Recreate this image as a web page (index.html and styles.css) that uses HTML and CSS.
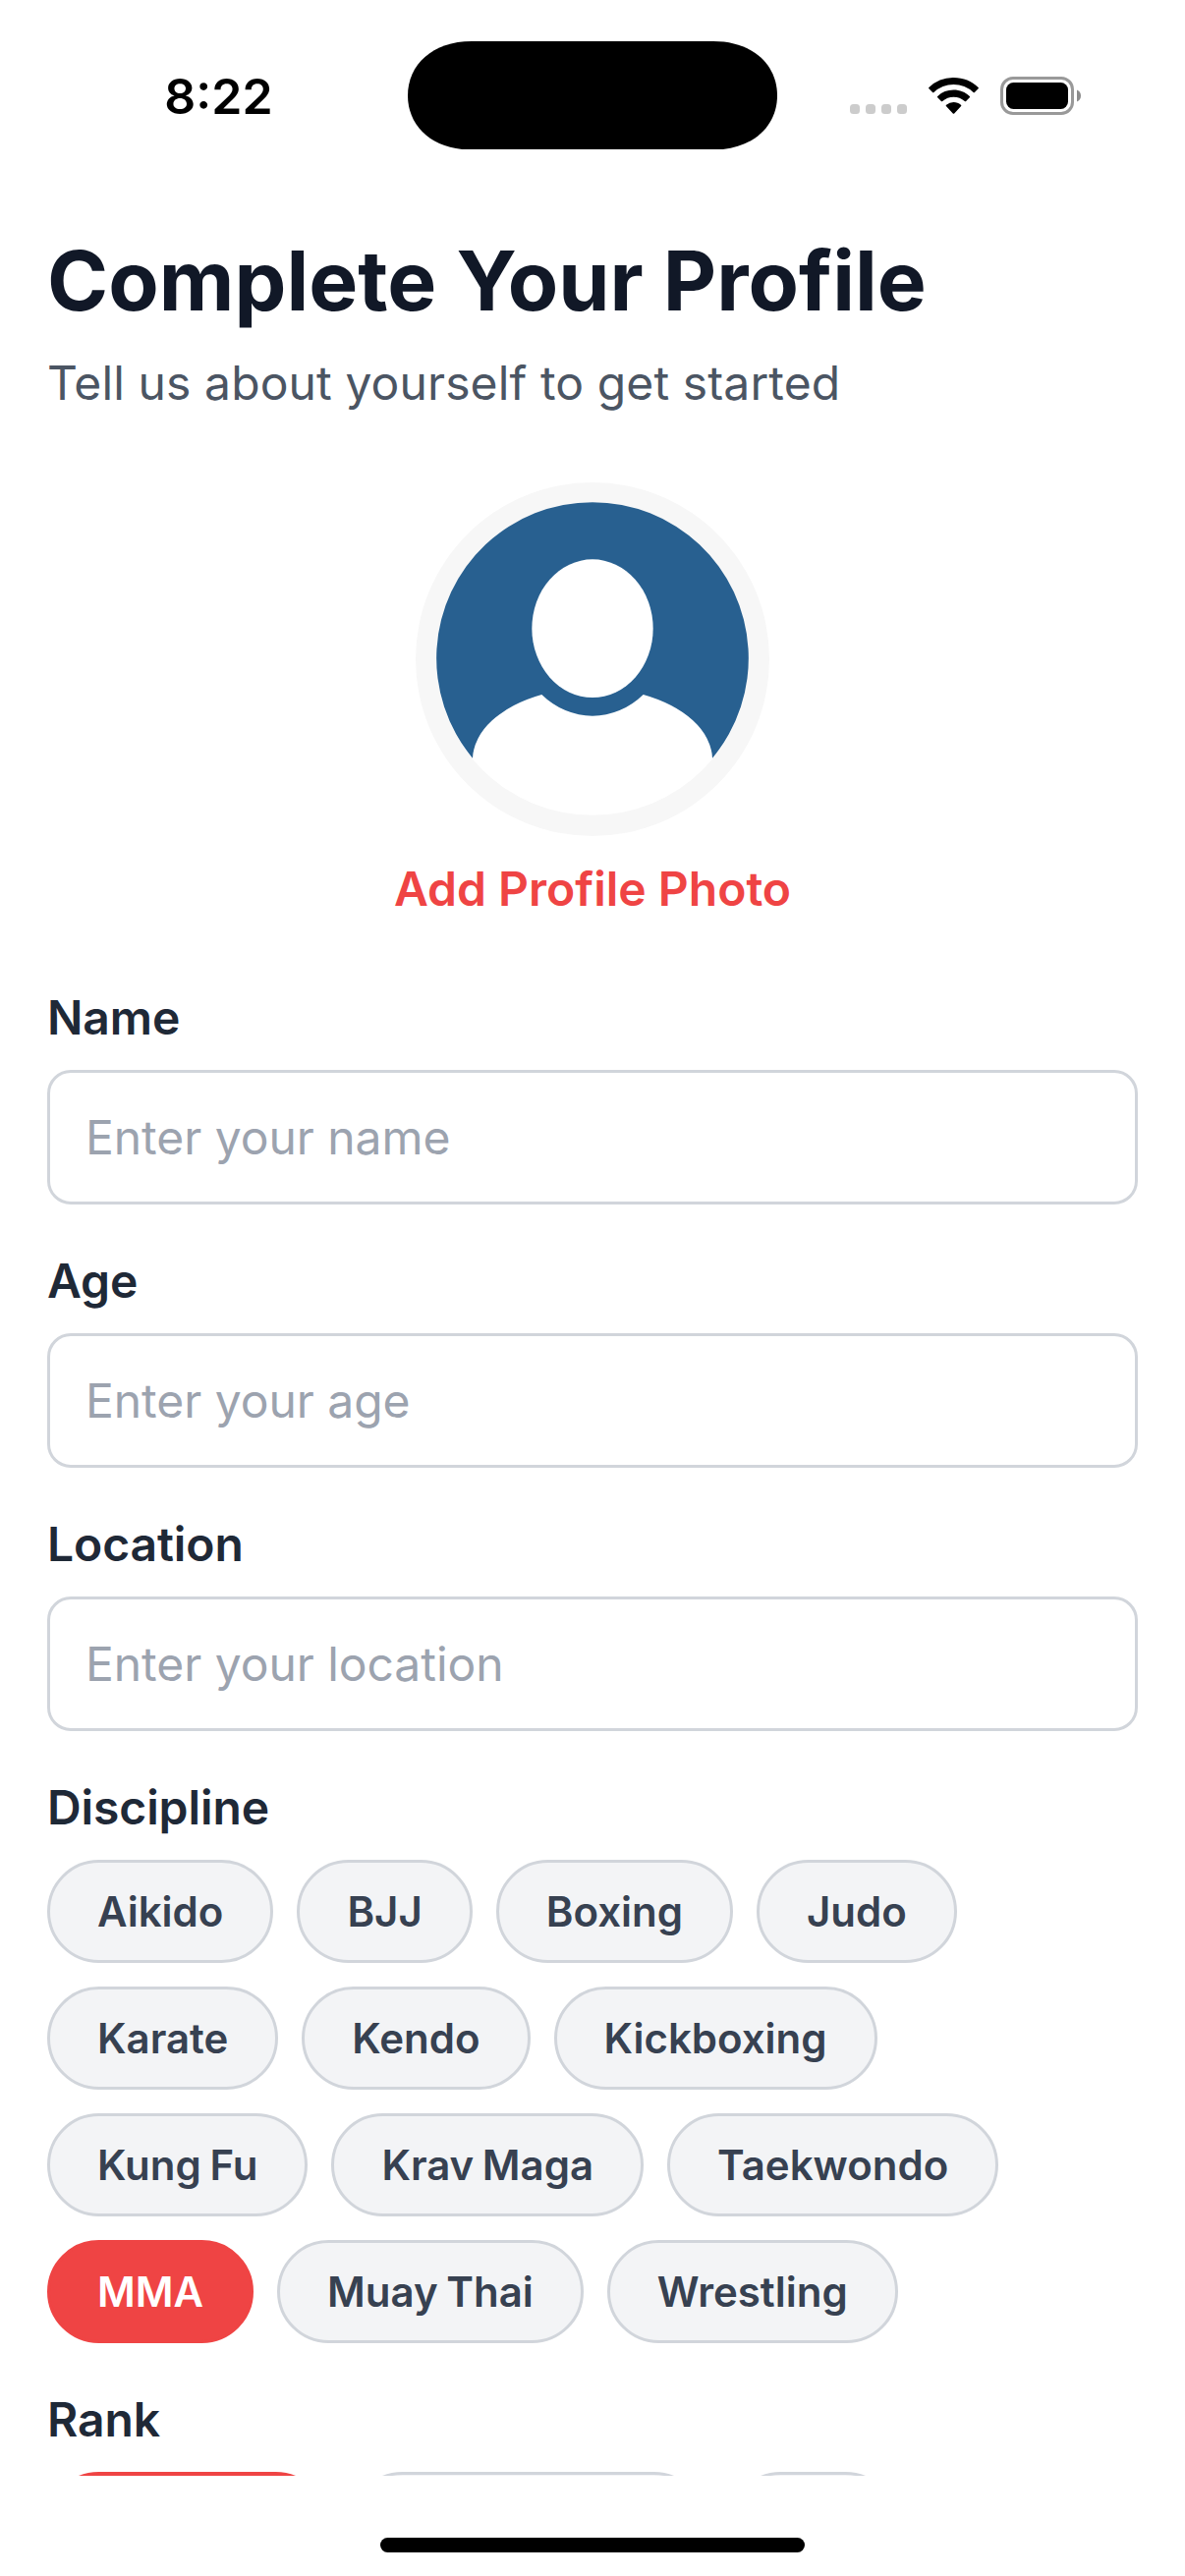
FILE: index.html
```html
<!DOCTYPE html>
<html lang="en">
<head>
<meta charset="utf-8">
<title>Complete Your Profile</title>
<link rel="stylesheet" href="styles.css">
</head>
<body>
<div class="screen">
  <header class="status">
    <div class="time">8:22</div>
    <svg class="island" viewBox="0 0 376 110.500"><path d="M65 0H311C351 0 376 24 376 55.250C376 86.500 351 110.500 311 110.500H65C25 110.500 0 86.500 0 55.250C0 24 25 0 65 0Z"/></svg>
    <div class="indicators">
      <div class="dots"><i></i><i></i><i></i><i></i></div>
      <svg class="wifi" viewBox="0 0 51 37">
        <path d="M25.500 0C35.300 0 44.200 3.700 50.600 9.900a.9.900 0 0 1 0 1.300L46.900 15a.9.900 0 0 1-1.300 0A29 29 0 0 0 5.400 15a.9.900 0 0 1-1.300 0L.4 11.200a.9.900 0 0 1 0-1.300A36 36 0 0 1 25.500 0Z"/>
        <path d="M25.500 12.600c6.300 0 12 2.400 16.300 6.300a.9.900 0 0 1 0 1.400L38.100 24a1 1 0 0 1-1.300 0 17 17 0 0 0-22.600 0 1 1 0 0 1-1.300 0l-3.700-3.700a.9.900 0 0 1 0-1.400 24 24 0 0 1 16.300-6.300Z"/>
        <path d="M25.500 25.100c2.800 0 5.400 1 7.400 2.700a.9.900 0 0 1 0 1.400l-6.700 7.300a1 1 0 0 1-1.400 0l-6.700-7.300a.9.900 0 0 1 0-1.400 11.500 11.500 0 0 1 7.400-2.700Z"/>
      </svg>
      <svg class="battery" viewBox="0 0 82 39">
        <rect x="1.500" y="1.500" width="72" height="36" rx="11.500" fill="none" stroke="#999" stroke-width="3"/>
        <rect x="6" y="6" width="63" height="27" rx="7.500"/>
        <path d="M78 13.500c2.500 1 4 3.300 4 6s-1.500 5-4 6Z" fill="#8c8c8c"/>
      </svg>
    </div>
  </header>
  <main class="content">
    <h1 class="title">Complete Your Profile</h1>
    <p class="subtitle">Tell us about yourself to get started</p>
    <div class="photo">
      <svg class="avatar" viewBox="0 0 1080 1080">
        <circle cx="540" cy="540" r="540" fill="#f7f7f7"/>
        <circle cx="540" cy="540" r="476.500" fill="#fff"/>
        <path fill="#286090" d="M174 842A476.500 476.500 0 1 1 906 842A366 220 0 0 0 695 648A237 267 0 0 1 385 648A366 220 0 0 0 174 842Z"/>
        <ellipse cx="540" cy="446" rx="185" ry="211" fill="#fff"/>
      </svg>
      <a class="photo-link">Add Profile Photo</a>
    </div>
    <section class="field"><label class="label" for="name">Name</label><input class="input" id="name" placeholder="Enter your name"></section>
    <section class="field"><label class="label" for="age">Age</label><input class="input" id="age" placeholder="Enter your age"></section>
    <section class="field"><label class="label" for="location">Location</label><input class="input" id="location" placeholder="Enter your location"></section>
    <section class="field">
      <div class="label">Discipline</div>
      <div class="chips">
        <span class="chip">Aikido</span><span class="chip">BJJ</span><span class="chip">Boxing</span><span class="chip">Judo</span>
        <span class="chip">Karate</span><span class="chip">Kendo</span><span class="chip">Kickboxing</span>
        <span class="chip">Kung Fu</span><span class="chip">Krav Maga</span><span class="chip">Taekwondo</span>
        <span class="chip selected">MMA</span><span class="chip">Muay Thai</span><span class="chip">Wrestling</span>
      </div>
    </section>
    <section class="field">
      <div class="label">Rank</div>
      <div class="chips">
        <span class="chip selected rank-a"></span><span class="chip rank-b"></span><span class="chip rank-c"></span>
      </div>
    </section>
  </main>
  <footer class="home"><div class="home-bar"></div></footer>
</div>
</body>
</html>
```
FILE: styles.css
```css
* { box-sizing: border-box; }
body { margin: 0; background: #fff; font-family: Inter, "Liberation Sans", sans-serif; }
.screen { width: 1206px; height: 2622px; display: flex; flex-direction: column; overflow: hidden; background: #fff; }
.status { height: 186px; flex: none; display: grid; grid-template-columns: 415px 376px 415px; align-items: start; }
.time { padding: 67px 0 0 30px; text-align: center; font-size: 50px; line-height: 62px; font-weight: 600; color: #000; }
.island { width: 376px; height: 110.5px; margin-top: 41.5px; }
.indicators { display: flex; align-items: flex-end; height: 39px; margin: 78px 0 0 74px; }
.dots { display: flex; gap: 6px; margin-bottom: 1px; }
.dots i { width: 10px; height: 10px; border-radius: 3.5px; background: #ccc; }
.wifi { width: 51px; height: 37px; margin: 0 22px 1px 22px; }
.battery { width: 82px; height: 39px; }
.content { height: 2334px; flex: none; overflow: hidden; padding: 49px 48px 0; }
.title { margin: 0 0 24px; font-size: 84px; line-height: 102px; font-weight: 700; letter-spacing: 0.05px; color: #111827; white-space: nowrap; }
.subtitle { margin: 0; font-size: 48px; line-height: 58px; letter-spacing: 0.11px; color: #4b5563; }
.photo { display: flex; flex-direction: column; align-items: center; margin: 72px 0 73px; }
.avatar { width: 360px; height: 360px; margin-bottom: 25px; }
.photo-link { font-size: 48px; line-height: 58px; font-weight: 600; color: #ef4444; }
.field { margin-bottom: 49px; }
.label { display: block; margin-bottom: 24px; font-size: 48px; line-height: 58px; font-weight: 600; letter-spacing: -0.1px; color: #1f2937; }
.input { display: block; width: 100%; height: 137px; padding: 0 36px; border: 3px solid #d1d5db; border-radius: 24px; background: #fff; font: 400 48px/58px Inter, sans-serif; letter-spacing: -0.05px; color: #111827; }
.input::placeholder { color: #9ca3af; opacity: 1; }
.chips { display: flex; flex-wrap: wrap; gap: 24px; }
.chip { height: 105px; padding: 24px 48px; border: 3px solid #d1d5db; border-radius: 60px; background: #f3f4f6; font-size: 42px; line-height: 51px; font-weight: 600; word-spacing: -2px; color: #374151; white-space: nowrap; }
.chip.selected { background: #ef4444; border-color: #ef4444; color: #fff; }
.rank-a { width: 285px; }
.rank-b { width: 361px; }
.rank-c { width: 171px; }
.home { flex: 1; display: flex; justify-content: center; align-items: flex-start; padding-top: 63px; }
.home-bar { width: 432px; height: 15px; border-radius: 8px; background: #000; }
```
